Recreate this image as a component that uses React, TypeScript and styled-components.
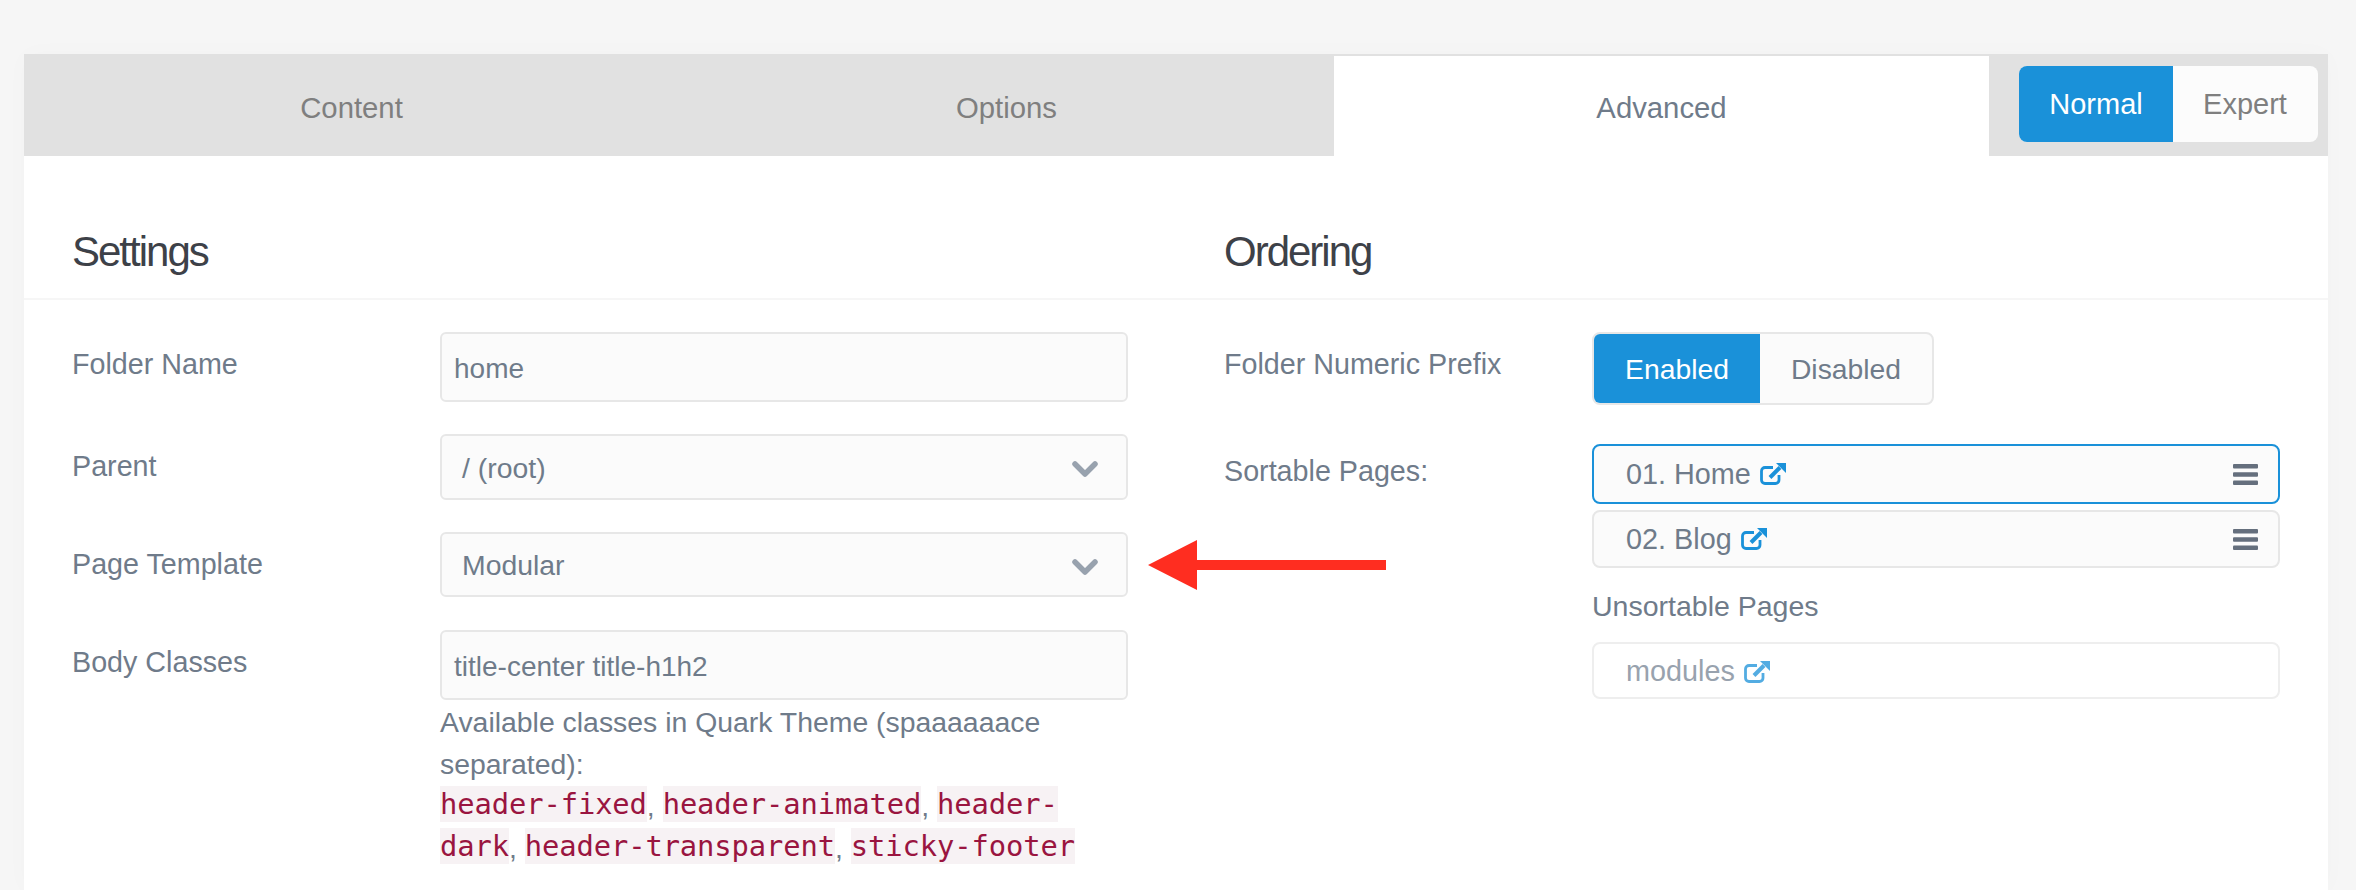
import React from "react";
import styled, { createGlobalStyle } from "styled-components";

const GlobalStyle = createGlobalStyle`
  html, body {
    margin: 0;
    padding: 0;
    background: #f6f6f6;
    font-family: "Liberation Sans", Arial, sans-serif;
  }
`;

const blue = "#1a91d9";
const slate = "#6f7b8a";

function ExternalIcon() {
  return (
    <LinkIcon viewBox="0 0 26 22">
      <path
        d="M13 4.500H5a3.500 3.500 0 0 0-3.500 3.500V17a3.500 3.500 0 0 0 3.500 3.500h10.500a3.500 3.500 0 0 0 3.500-3.500v-5"
        fill="none"
        stroke="currentColor"
        strokeWidth="2.800"
      />
      <path d="M10 14.500 20 4.500" stroke="currentColor" strokeWidth="4" />
      <path d="M16 0h10v10z" fill="currentColor" />
    </LinkIcon>
  );
}

function Chevron() {
  return (
    <ChevronIcon viewBox="0 0 26 16">
      <path d="M3 3l10 10L23 3" fill="none" stroke="#98a2ae" strokeWidth="5.500" strokeLinecap="round" strokeLinejoin="round" />
    </ChevronIcon>
  );
}

function Bars() {
  return (
    <BarsIcon viewBox="0 0 25 21">
      <rect y="0" width="25" height="4.500" rx="1" />
      <rect y="8.250" width="25" height="4.500" rx="1" />
      <rect y="16.500" width="25" height="4.500" rx="1" />
    </BarsIcon>
  );
}

export default function App() {
  return (
    <Page>
      <GlobalStyle />
      <Card>
        <TabBar>
          <Tab>Content</Tab>
          <Tab>Options</Tab>
          <Tab $active>Advanced</Tab>
          <ModeArea>
            <ModeSwitch>
              <ModeButton $active>Normal</ModeButton>
              <ModeButton>Expert</ModeButton>
            </ModeSwitch>
          </ModeArea>
        </TabBar>

        <HeadingRow>
          <Heading>Settings</Heading>
          <Heading>Ordering</Heading>
        </HeadingRow>

        <Columns>
          <Column>
            <Field $mb={32}>
              <Label>Folder Name</Label>
              <TextInput>home</TextInput>
            </Field>
            <Field $mb={32}>
              <Label>Parent</Label>
              <SelectBox $height={66}>
                / (root)
                <Chevron />
              </SelectBox>
            </Field>
            <Field $mb={33}>
              <Label>Page Template</Label>
              <SelectBox $height={65}>
                Modular
                <Chevron />
              </SelectBox>
            </Field>
            <Field>
              <Label>Body Classes</Label>
              <div>
                <TextInput>title-center title-h1h2</TextInput>
                <Help>
                  Available classes in Quark Theme (spaaaaaace separated):
                  <br />
                  <Code>header-fixed</Code>, <Code>header-animated</Code>, <Code>header-dark</Code>,{" "}
                  <Code>header-transparent</Code>, <Code>sticky-footer</Code>
                </Help>
              </div>
            </Field>
          </Column>

          <Column>
            <Field $mb={39}>
              <Label>Folder Numeric Prefix</Label>
              <Toggle>
                <ToggleOption $active>Enabled</ToggleOption>
                <ToggleOption>Disabled</ToggleOption>
              </Toggle>
            </Field>
            <Field>
              <Label $top={6}>Sortable Pages:</Label>
              <div>
                <PageItem $focused>
                  <PageName>
                    01. Home <ExternalIcon />
                  </PageName>
                  <Bars />
                </PageItem>
                <PageItem>
                  <PageName>
                    02. Blog <ExternalIcon />
                  </PageName>
                  <Bars />
                </PageItem>
                <SubLabel>Unsortable Pages</SubLabel>
                <LockedItem>
                  modules <ExternalIcon />
                </LockedItem>
              </div>
            </Field>
          </Column>
        </Columns>
      </Card>

      <Arrow viewBox="0 0 238 50">
        <path d="M0 25 49 0v20h189v10H49v20z" fill="#ff2d20" />
      </Arrow>
    </Page>
  );
}

const Page = styled.main`
  position: relative;
  box-sizing: border-box;
  width: 2356px;
  height: 890px;
  padding: 54px 28px 0 24px;
  overflow: hidden;
`;

const Card = styled.section`
  height: 836px;
  background: #fff;
  box-shadow: 0 0 24px rgba(0, 0, 0, 0.02);
`;

const TabBar = styled.nav`
  display: flex;
  height: 102px;
  background: #e1e1e1;
`;

const Tab = styled.div<{ $active?: boolean }>`
  box-sizing: border-box;
  width: 655px;
  height: ${(p) => (p.$active ? "100px" : "102px")};
  margin-top: ${(p) => (p.$active ? "2px" : "0")};
  display: flex;
  align-items: center;
  justify-content: center;
  padding-top: ${(p) => (p.$active ? "4px" : "5px")};
  font-size: 29.300px;
  color: ${(p) => (p.$active ? slate : "#7f7f7f")};
  background: ${(p) => (p.$active ? "#fff" : "transparent")};
`;

const ModeArea = styled.div`
  flex: 1;
  padding: 12px 10px 0 30px;
`;

const ModeSwitch = styled.div`
  display: flex;
  height: 76px;
  border-radius: 8px;
  overflow: hidden;
  background: #fcfcfc;
`;

const ModeButton = styled.div<{ $active?: boolean }>`
  display: flex;
  align-items: center;
  justify-content: center;
  width: ${(p) => (p.$active ? "154px" : "144px")};
  font-size: 29px;
  color: ${(p) => (p.$active ? "#fff" : "#7f7f7f")};
  background: ${(p) => (p.$active ? blue : "transparent")};
`;

const HeadingRow = styled.div`
  display: grid;
  grid-template-columns: 1056px 1056px;
  column-gap: 96px;
  height: 142px;
  padding: 0 48px;
  border-bottom: 2px solid #f6f6f6;
`;

const Heading = styled.h2`
  margin: 0;
  padding-top: 73px;
  font-size: 42px;
  line-height: 46px;
  font-weight: 400;
  letter-spacing: -2px;
  color: #3d4148;
`;

const Columns = styled.div`
  display: grid;
  grid-template-columns: 1056px 1056px;
  column-gap: 96px;
  padding: 32px 48px 0;
`;

const Column = styled.div`
  display: flex;
  flex-direction: column;
`;

const Field = styled.div<{ $mb?: number }>`
  display: grid;
  grid-template-columns: 368px 688px;
  margin-bottom: ${(p) => p.$mb ?? 0}px;
`;

const Label = styled.div<{ $top?: number }>`
  padding-top: ${(p) => p.$top ?? 11}px;
  font-size: 28.700px;
  line-height: 42px;
  color: ${slate};
`;

const TextInput = styled.div`
  box-sizing: border-box;
  display: flex;
  align-items: center;
  height: 70px;
  padding: 4px 12px 0 12px;
  font-size: 28px;
  color: ${slate};
  background: #fbfbfb;
  border: 2px solid #e7e7e7;
  border-radius: 6px;
`;

const SelectBox = styled.div<{ $height: number }>`
  box-sizing: border-box;
  display: flex;
  align-items: center;
  justify-content: space-between;
  height: ${(p) => p.$height}px;
  padding: 2px 28px 0 20px;
  font-size: 28.400px;
  color: ${slate};
  background: #fbfbfb;
  border: 2px solid #e7e7e7;
  border-radius: 6px;
`;

const ChevronIcon = styled.svg`
  width: 26px;
  height: 16px;
  margin-top: 2px;
`;

const Help = styled.div`
  margin-top: 1px;
  font-size: 28.400px;
  line-height: 42px;
  color: ${slate};
`;

const Code = styled.code`
  padding: 1px 0;
  vertical-align: 2px;
  line-height: 1;
  font-family: "DejaVu Sans Mono", "Liberation Mono", monospace;
  font-size: 28.800px;
  letter-spacing: -0.1px;
  color: #9a1540;
  background: #f7f2f4;
`;

const Toggle = styled.div`
  box-sizing: border-box;
  display: flex;
  width: 342px;
  height: 73px;
  background: #fbfbfb;
  border: 2px solid #e7e7e7;
  border-radius: 8px;
  overflow: hidden;
`;

const ToggleOption = styled.div<{ $active?: boolean }>`
  display: flex;
  align-items: center;
  justify-content: center;
  box-sizing: border-box;
  width: ${(p) => (p.$active ? "166px" : "172px")};
  padding-top: 2px;
  font-size: 28.300px;
  color: ${(p) => (p.$active ? "#fff" : slate)};
  background: ${(p) => (p.$active ? blue : "transparent")};
`;

const PageItem = styled.div<{ $focused?: boolean }>`
  box-sizing: border-box;
  display: flex;
  align-items: center;
  justify-content: space-between;
  height: ${(p) => (p.$focused ? "60px" : "58px")};
  margin-bottom: 6px;
  padding: 0 20px 0 32px;
  background: #fbfbfb;
  border: 2px solid ${(p) => (p.$focused ? blue : "#e7e7e7")};
  border-radius: 8px;
`;

const PageName = styled.div`
  display: flex;
  align-items: center;
  gap: 1px;
  font-size: 28.800px;
  color: ${slate};
  white-space: pre;
`;

const LinkIcon = styled.svg`
  width: 26px;
  height: 22px;
  color: ${blue};
`;

const BarsIcon = styled.svg`
  width: 25px;
  height: 21px;
  fill: #656f7d;
`;

const SubLabel = styled.div`
  margin: 17px 0 15px;
  font-size: 28.500px;
  line-height: 42px;
  color: ${slate};
`;

const LockedItem = styled.div`
  box-sizing: border-box;
  display: flex;
  align-items: center;
  height: 57px;
  padding: 2px 32px 0;
  gap: 1px;
  font-size: 28.800px;
  white-space: pre;
  color: #98a2ae;
  border: 2px solid #eeeeee;
  border-radius: 8px;

  ${LinkIcon} {
    opacity: 0.75;
  }
`;

const Arrow = styled.svg`
  position: absolute;
  left: 1148px;
  top: 540px;
  width: 238px;
  height: 50px;
`;
